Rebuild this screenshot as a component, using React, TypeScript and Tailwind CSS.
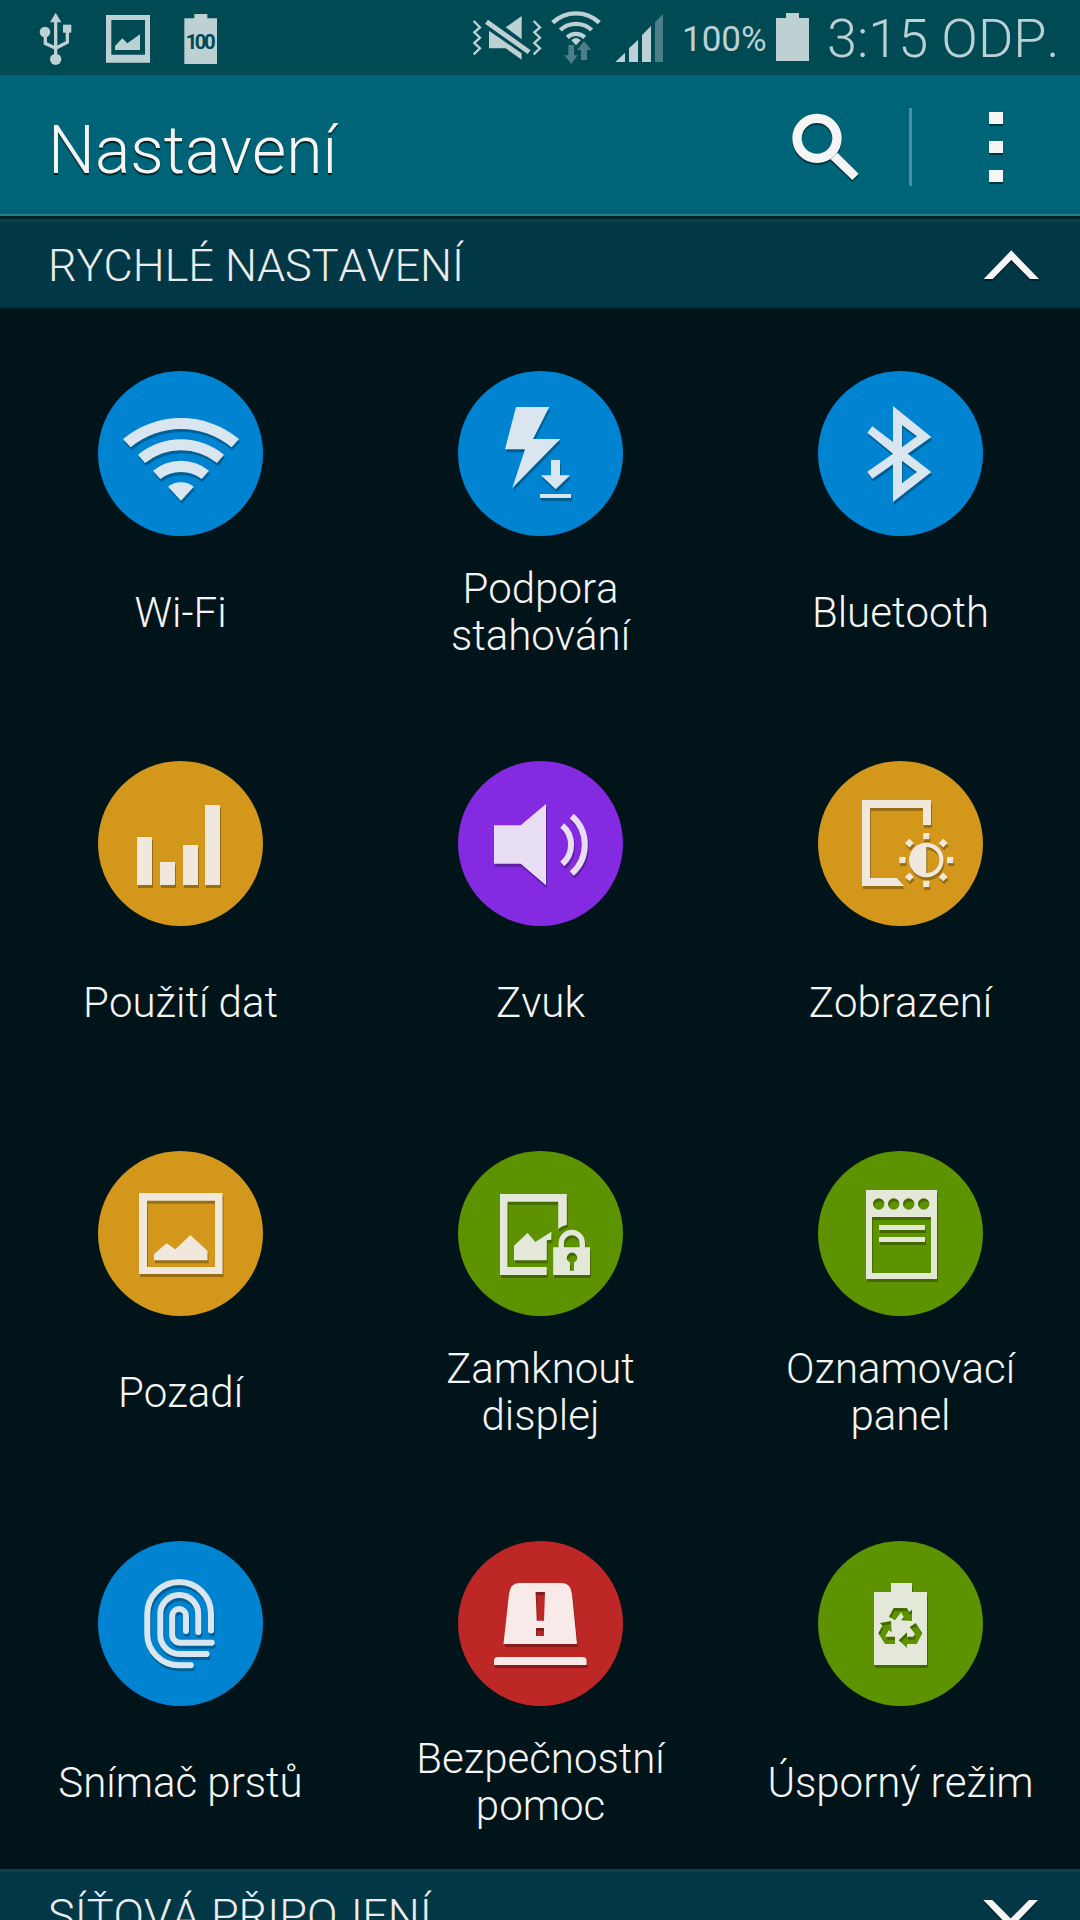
import type { ReactNode } from "react";

type Tile = {
  label: string[];
  circle: string;
  tint: string;
  icon: ReactNode;
};

const tiles: Tile[] = [
  {
    label: ["Wi-Fi"],
    circle: "bg-[#0084d2]",
    tint: "text-[#dae6ef]",
    icon: (
      <>
        <path d="M25 68A90.6 90.6 0 0 1 141 68L133.6 76.3A79 79 0 0 0 32.6 76.3Z" />
        <path d="M40 83.7A67.7 67.7 0 0 1 126 83.7L119 92A57.4 57.4 0 0 0 47 92Z" />
        <path d="M55 99.7A44.2 44.2 0 0 1 111 99.7L103.7 108A34 34 0 0 0 62.3 108Z" />
        <path d="M70 115.7A20.8 20.8 0 0 1 95.8 115.7L83 129.7Z" />
      </>
    ),
  },
  {
    label: ["Podpora", "stahování"],
    circle: "bg-[#0084d2]",
    tint: "text-[#dae6ef]",
    icon: (
      <>
        <path d="M58 36H91.3L75 68H102.3L54.3 117L67 78.3H47Z" />
        <path d="M93 89H102V104.3H112L97.7 118.3L83 104.3H93Z" />
        <path d="M82 123H113V127H82Z" />
      </>
    ),
  },
  {
    label: ["Bluetooth"],
    circle: "bg-[#0084d2]",
    tint: "text-[#dae6ef]",
    icon: (
      <path
        fillRule="evenodd"
        d="M75 35L113.3 66L89.7 82.7L113.3 101L75 131V93.3L54.3 107.7L49.3 100.7L75 82.7L49.3 61.7L54.3 55.3L75 71ZM84 54V76.3L99 65.3ZM84 89.7V112.3L99 101Z"
      />
    ),
  },
  {
    label: ["Použití dat"],
    circle: "bg-[#d3971b]",
    tint: "text-[#f0e8dd]",
    icon: <path d="M39 76H54V124H39ZM62 101H77V124H62ZM85 84H100V124H85ZM107 44H122V124H107Z" />,
  },
  {
    label: ["Zvuk"],
    circle: "bg-[#842be2]",
    tint: "text-[#e8def3]",
    icon: (
      <>
        <path d="M36 64.3H62.7L88 43V124.3L62.7 102.7H36Z" />
        <g fill="none" stroke="currentColor" strokeWidth="6">
          <path d="M104.2 64.5A25.2 25.2 0 0 1 104.2 102.9" />
          <path d="M113.8 55A38.2 38.2 0 0 1 113.8 112.4" />
        </g>
      </>
    ),
  },
  {
    label: ["Zobrazení"],
    circle: "bg-[#d3971b]",
    tint: "text-[#f0e8dd]",
    icon: (
      <>
        <path d="M44 39H113V64H105V47H52V117H78.7L86 125H44Z" />
        <path
          fillRule="evenodd"
          d="M108.3 81.7A17.3 17.3 0 1 1 108.3 116.3A17.3 17.3 0 1 1 108.3 81.7ZM108.3 86A13.1 13.1 0 0 1 108.3 112.2Z"
        />
        {[0, 45, 90, 135, 180, 225, 270, 315].map((angle) => (
          <rect key={angle} x="105.2" y="72" width="6.2" height="6.2" transform={`rotate(${angle} 108.3 99)`} />
        ))}
      </>
    ),
  },
  {
    label: ["Pozadí"],
    circle: "bg-[#d3971b]",
    tint: "text-[#f0e8dd]",
    icon: (
      <>
        <path fillRule="evenodd" d="M41 42H124.5V123H41ZM49 49.7V116H117V49.7Z" />
        <path d="M56 103.3L68.4 92.3L77.4 98.3L92.4 84L109.5 100V109.3H56Z" />
      </>
    ),
  },
  {
    label: ["Zamknout", "displej"],
    circle: "bg-[#5d9200]",
    tint: "text-[#e4e8d9]",
    icon: (
      <>
        <path d="M42 43H108.8V73.7Q103.5 75 100.2 78V50.7H49.5V116H88.8V124H42Z" />
        <path d="M56 94.7L69.5 82L77.4 91L93.4 80.7V88.7L88.8 89.3V109.3H56Z" />
        <path d="M103.3 98V92A10.5 10.5 0 0 1 124.3 92V98" fill="none" stroke="currentColor" strokeWidth="5.4" />
        <path
          fillRule="evenodd"
          d="M95.2 96.3H132V124H95.2ZM112 111.6V119.7H116V111.6A5.2 5.2 0 1 0 112 111.6Z"
        />
      </>
    ),
  },
  {
    label: ["Oznamovací", "panel"],
    circle: "bg-[#5d9200]",
    tint: "text-[#e4e8d9]",
    icon: (
      <>
        <path
          fillRule="evenodd"
          d="M48 39H119V128H48ZM54 66V122H113V66ZM55 53a5.7 5.7 0 1 0 11.4 0a5.7 5.7 0 1 0 -11.4 0ZM70 53a5.7 5.7 0 1 0 11.4 0a5.7 5.7 0 1 0 -11.4 0ZM85 53a5.7 5.7 0 1 0 11.4 0a5.7 5.7 0 1 0 -11.4 0ZM100 53a5.7 5.7 0 1 0 11.4 0a5.7 5.7 0 1 0 -11.4 0Z"
        />
        <path d="M61 74H107V79H61ZM61 86H107V91H61Z" />
      </>
    ),
  },
  {
    label: ["Snímač prstů"],
    circle: "bg-[#0084d2]",
    tint: "text-[#dae6ef]",
    icon: (
      <g fill="none" stroke="currentColor" strokeWidth="6" strokeLinecap="round">
        <path d="M113 89.5V73A31.8 32 0 0 0 49.3 73V93A32 31.3 0 0 0 81.3 124.3H92.8" />
        <path d="M100.3 91V73A19 19 0 0 0 62.3 73V94A19 19 0 0 0 81.3 113H108.6" />
        <path d="M88 90V75A6.9 6.9 0 0 0 74.2 75V93.7A8 8 0 0 0 82.2 101.7H113.7" />
      </g>
    ),
  },
  {
    label: ["Bezpečnostní", "pomoc"],
    circle: "bg-[#bd2726]",
    tint: "text-[#f8eae9]",
    icon: (
      <>
        <path
          fillRule="evenodd"
          d="M45.5 103L51 53Q52.5 42 61 42H104Q112.5 42 114 53L119 103ZM77.6 51L78.8 79.7H86L87 51ZM78 87V95H86V87Z"
        />
        <path d="M36 124V120Q36 116 40 116H124.6Q128.6 116 128.6 120V124Z" />
      </>
    ),
  },
  {
    label: ["Úsporný režim"],
    circle: "bg-[#5d9200]",
    tint: "text-[#e4e8d9]",
    icon: (
      <path
        fillRule="evenodd"
        d="M56 51H73V42H94V51H109V124H56ZM75.7 67H88.7L91.3 71L94 68.7V80L83.3 79.3L85.7 76L83 71.3L77 79.3L71 75.7ZM62 82L73 80L73.7 91.3L70.7 89.3L67.3 95.7H77V103H67L60.3 92.3L64.3 84.7ZM97.7 82L104.3 92.3L98.7 103H89V107L80.7 99.3L89 91.3V95.7H95.3L97 93L91.7 86Z"
      />
    ),
  },
];

function StatusBar() {
  return (
    <div className="flex h-[75px] shrink-0 bg-[#004a54] pl-[39px] text-[#bdd0d3]">
      <svg className="h-[75px] w-[34px]" viewBox="117 0 102 225" fill="currentColor">
        <path d="M167 38L184 67H150Z" />
        <circle cx="167" cy="178" r="17" />
        <circle cx="135" cy="96" r="16" />
        <path d="M189 74H214V98H189Z" />
        <path d="M167 60V165M136 105V130L167 145M202 95V127L167 145" fill="none" stroke="currentColor" strokeWidth="10" />
      </svg>
      <svg className="ml-[33px] h-[75px] w-[44px]" viewBox="318 0 132 225" fill="currentColor">
        <path fillRule="evenodd" d="M318 45H450V188H318ZM334 60V164H435V60Z" />
        <path d="M345 138L367 115L382 130L420 103V150H345Z" />
      </svg>
      <svg className="ml-[34px] h-[75px] w-[33px]" viewBox="551 0 99 225" fill="currentColor">
        <path d="M552 55H582V42H621V55H650V192H552Z" />
        <text x="601" y="147" textAnchor="middle" textLength="90" className="fill-[#004a54] font-['Roboto'] text-[61px] font-bold">
          100
        </text>
      </svg>
      <svg className="ml-[254px] h-[75px] w-[71px]" viewBox="93 0 213 225" fill="currentColor">
        <path d="M147 92L245 160V179L197 145H147Z" />
        <path d="M245 48V118L197 82Z" />
        <path d="M144 59L272 151L263 162L135 71Z" />
        <g fill="none" stroke="currentColor" strokeWidth="7">
          <path d="M101 63L120 82L103 97L120 113L103 129L120 145L101 163" />
          <path d="M281 63L300 82L283 97L300 113L283 129L300 145L281 163" />
        </g>
      </svg>
      <svg className="ml-2 h-[75px] w-[52px]" viewBox="330 0 156 225" fill="currentColor">
        <g fill="none" stroke="currentColor" strokeWidth="13">
          <path d="M338 68A101.5 101.5 0 0 1 478 68" />
          <path d="M361 90A70 70 0 0 1 455 90" />
          <path d="M382 112A38 38 0 0 1 434 112" />
        </g>
        <path d="M394 121Q408 107 422 121L408 136Z" />
        <g className="text-[#4d7f88]">
          <path d="M385 135H402V166H413L394 192L373 166H385Z" />
          <path d="M423 180H441V150H454L432 124L411 150H423Z" />
        </g>
      </svg>
      <svg className="ml-3 h-[75px] w-[50px]" viewBox="522 0 150 225" fill="currentColor">
        <path d="M526 186L555 158V186ZM567 145L594 120V186H567ZM606 105L633 78V186H606Z" />
        <path className="text-[#4d7f88]" d="M645 67L669 42V186H645Z" />
      </svg>
      <span className="ml-[18px] w-[94px] pt-[2px] text-[35px] leading-[75px] whitespace-nowrap">100%</span>
      <svg className="h-[75px] w-[33px]" viewBox="108 0 99 225" fill="currentColor">
        <path d="M108 54H138V39H177V54H207V183H108Z" />
      </svg>
      <span className="ml-[18px] pt-[2px] text-[54px] leading-[73px] font-light whitespace-nowrap">3:15 ODP.</span>
    </div>
  );
}

function TitleBar() {
  return (
    <header className="flex h-[141px] shrink-0 items-center border-b-2 border-[#2a7c88] bg-[#006478] pl-12 text-[#f5f5f5]">
      <h1 className="w-[741px] pt-3 text-[66px] leading-none font-light [text-shadow:0_2px_1px_#00222b]">Nastavení</h1>
      <svg className="h-[78px] w-[72px] translate-y-[2px] drop-shadow-[0_2px_0_#003440]" viewBox="147 324 216 234" fill="currentColor">
        <circle cx="231" cy="415" r="60" fill="none" stroke="currentColor" strokeWidth="28" />
        <path d="M292 458L356 521L337 540L272 478Z" />
      </svg>
      <div className="ml-12 h-[78px] w-[3px] translate-y-[2px] bg-[#4592a0]" />
      <div className="ml-[77px] flex translate-y-[2px] flex-col gap-[17px]">
        <div className="h-3 w-[14px] bg-[#f5f5f5] shadow-[0_2px_0_#003440]" />
        <div className="h-3 w-[14px] bg-[#f5f5f5] shadow-[0_2px_0_#003440]" />
        <div className="h-3 w-[14px] bg-[#f5f5f5] shadow-[0_2px_0_#003440]" />
      </div>
    </header>
  );
}

function SectionHeader({ title, open }: { title: string; open: boolean }) {
  return (
    <div className="flex h-[90px] shrink-0 items-center justify-between border-t-[3px] border-b-2 border-t-[#0e404b] border-b-[#01212a] bg-[#023845] pr-[41px] pl-12 text-[#ececec]">
      <h2 className="pt-px text-[45px] leading-none font-light whitespace-nowrap">{title}</h2>
      <svg className="h-[33px] w-14 text-[#f5f5f5] drop-shadow-[0_2px_0_#01212a]" viewBox="0 0 56 33" fill="currentColor">
        <path d={open ? "M0.7 31L28.3 2.3L56 31H47L28.3 12L9.7 31Z" : "M0.3 2L27.7 30.5L55 2H46L27.7 20.5L9.3 2Z"} />
      </svg>
    </div>
  );
}

function QuickTile({ tile }: { tile: Tile }) {
  return (
    <div className="flex h-[390px] flex-col items-center pt-[62px] pl-px">
      <div className={`size-[165px] rounded-full ${tile.circle}`}>
        <svg className={`size-[164px] drop-shadow-[1px_3px_0_rgba(0,0,0,0.28)] ${tile.tint}`} viewBox="0 0 164 164" fill="currentColor">
          {tile.icon}
        </svg>
      </div>
      <div className="mt-[29px] flex h-[94px] flex-col justify-center text-center text-[42px] leading-[47px] font-light text-[#f5f5f5]">
        {tile.label.map((line) => (
          <span key={line} className="block whitespace-nowrap">
            {line}
          </span>
        ))}
      </div>
    </div>
  );
}

export default function App() {
  return (
    <div className="flex h-[1920px] w-[1080px] flex-col overflow-hidden bg-[#00141a] font-['Roboto',sans-serif] [font-kerning:none]">
      <StatusBar />
      <TitleBar />
      <div className="h-[3px] shrink-0 bg-[#012028]" />
      <SectionHeader title="RYCHLÉ NASTAVENÍ" open />
      <main className="grid shrink-0 grid-cols-3">
        {tiles.map((tile) => (
          <QuickTile key={tile.label.join(" ")} tile={tile} />
        ))}
      </main>
      <SectionHeader title="SÍŤOVÁ PŘIPOJENÍ" open={false} />
    </div>
  );
}
